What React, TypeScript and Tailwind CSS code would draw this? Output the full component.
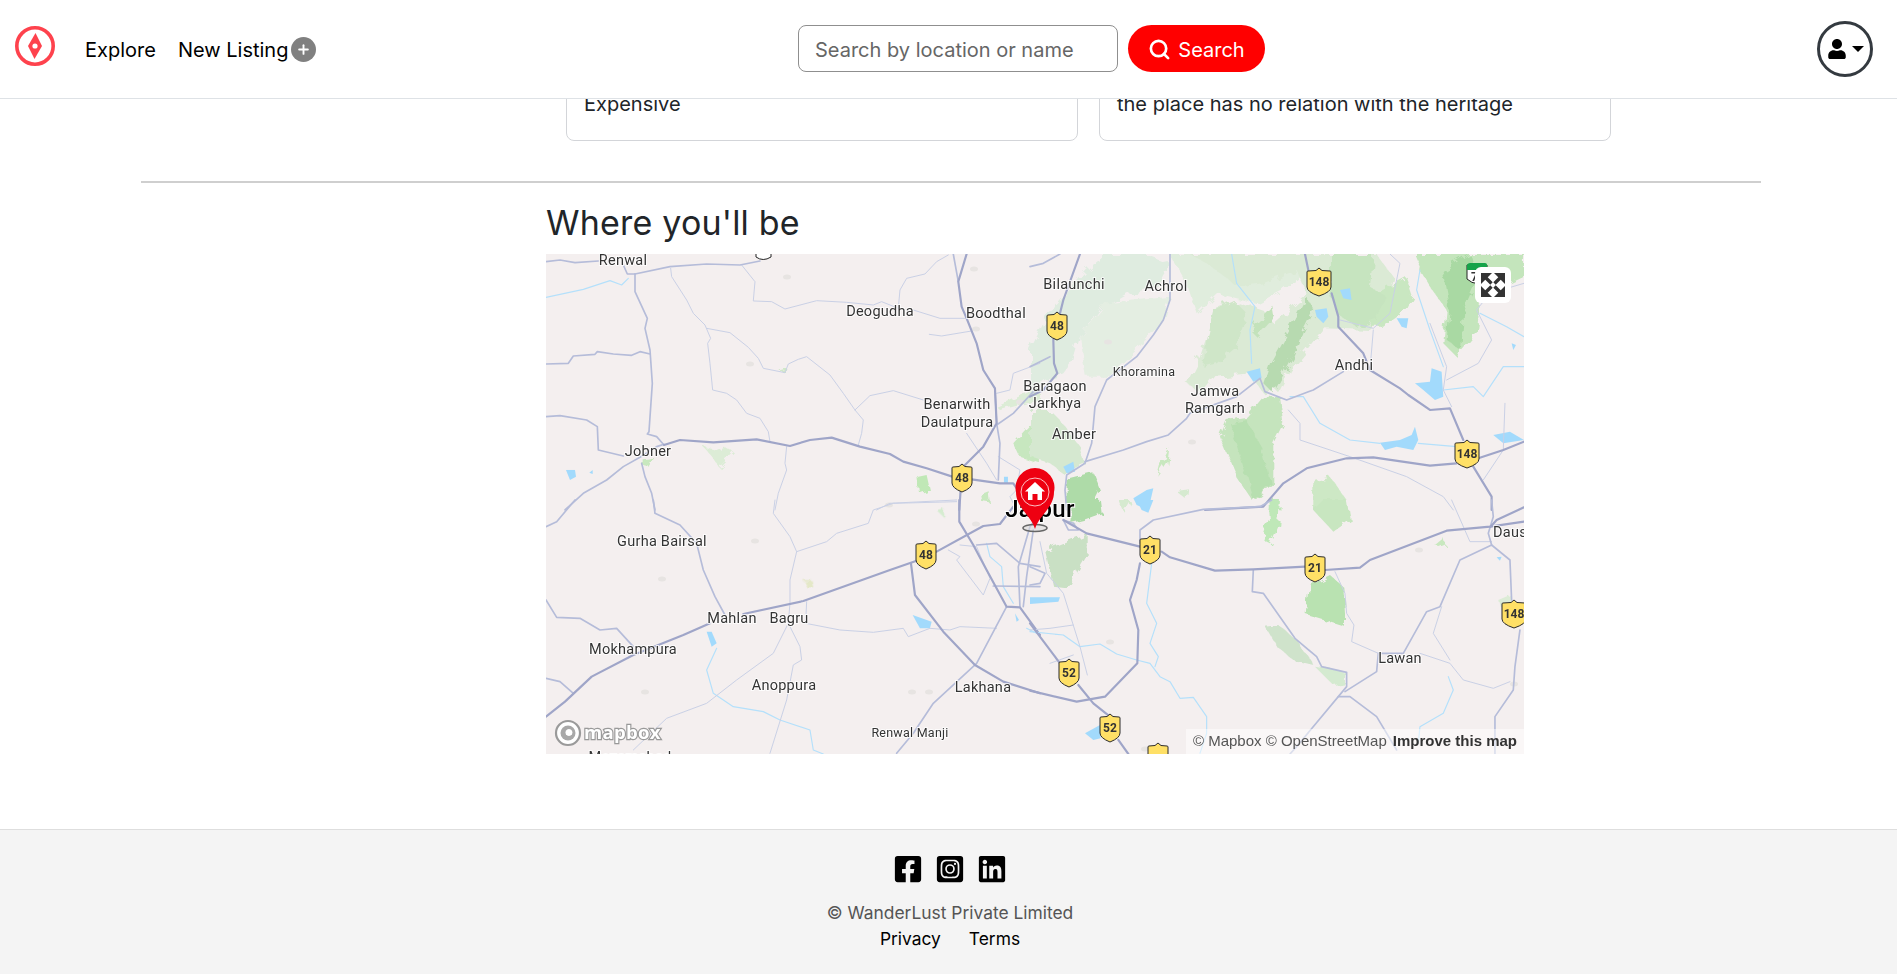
import { FaFacebookSquare, FaInstagramSquare, FaLinkedin, FaUser } from "react-icons/fa";
import { Plus, Search } from "lucide-react";

// map traces, per layer, in the coords of each quadrant (3x scale)
const quads = [
  {
    x: -6,
    y: -4,
    greens: [
      ["M490,590 L530,600 550,590 585,610 540,655 520,625 Z", "#dcecd6"],
      ["M1135,680 L1160,675 1170,720 1140,730 Z", "#c0e8b6"],
      ["M305,625 L340,620 320,650 305,645 Z", "#c8e8bf"],
      ["M1420,580 L1500,490 1500,640 1440,620 Z", "#c7e7bf"],
      ["M1370,470 L1480,420 1500,410 1500,450 1380,480 Z", "#dcecd6"],
      ["M715,358 L740,352 735,368 Z", "#cfe8c8"],
      ["M1320,730 L1345,720 1350,760 1325,755 Z", "#c8e8bf"],
    ],
    water: ["M78,660 L105,660 108,680 90,690 Z", "M148,668 L158,660 158,672 Z", "M1392,680 L1404,680 1404,700 1392,698 Z"],
    rivers: ["M18,142 L130,118 210,92 245,105 265,85"],
    minor: [
      "M392,55 L395,80 440,150 460,190 495,225 512,265 503,280 510,340 518,420 560,430 590,450 620,490 660,505 685,545 690,575",
      "M500,235 L570,248 625,292 655,325 670,355 735,368 745,342 775,328 800,320 870,375 910,430 945,480 970,510 965,550 955,585",
      "M945,480 L990,437 1060,422 1150,450",
      "M605,45 L645,95 640,153 695,155 735,177 830,152 920,157 1000,165 1025,155 1075,175 1080,120 1100,85 1155,72 1190,35 1225,15",
      "M1120,180 L1200,205 1275,205",
      "M1168,253 L1205,258 1295,243",
      "M1370,430 L1410,420 1420,370 1500,340",
      "M740,590 735,640 740,660 715,730 705,780",
      "M1280,550 L1340,640 1370,690",
      "M1375,620 L1440,660 1430,720 1410,740 1430,780",
      "M1010,780 L1050,760 1250,750",
    ],
    secondary: [
      "M18,35 L60,30 105,38 175,33",
      "M250,45 L262,72 285,72",
      "M285,72 L390,50 500,42 600,45 660,33",
      "M285,72 L285,125 322,205 315,235 330,300 337,400 327,545 322,552 350,560 372,585",
      "M18,342 L85,340 100,318 165,313 172,305 220,312 275,316 300,305 330,312",
      "M18,500 L60,497 140,510 172,530 175,600 250,618",
      "M75,780 L130,730 200,690 250,650 300,622 350,590 372,583",
      "M305,640 L315,680 335,730 345,780",
      "M1240,12 L1255,95",
      "M1365,415 1370,520 1380,580 1375,690",
      "M1370,525 L1420,490 1480,425 1500,420",
    ],
    major: [
      "M372,585 L420,570 520,577 650,568 750,588 810,570 875,563 960,590 1050,612 1090,635 1160,655 1237,680",
      "M1295,688 L1380,700 1420,700 1440,730",
      "M1280,12 L1255,95 1265,170 1280,205 1310,280 1330,360 1365,415 1370,520 1330,590 1270,650",
      "M1262,720 L1258,780",
    ],
  },
  {
    x: 484,
    y: -4,
    greens: [
      ["M230,12 L350,12 L420,40 L380,110 L300,130 L210,180 L150,260 L130,330 L100,370 L60,390 L0,430 L0,300 L50,200 L110,130 L170,60 Z", "#dfece0"],
      ["M150,260 L230,160 420,140 400,210 320,300 230,380 170,380 Z", "#e4eee2"],
      ["M0,480 L60,480 90,510 150,590 165,640 100,670 60,640 0,620 Z", "#d5e8d0"],
      ["M420,12 L830,12 L840,60 L760,120 L680,160 L560,130 L500,190 L470,100 Z", "#e0eddd"],
      ["M480,12 L830,12 L1040,12 L1090,80 L1060,200 L1020,240 L880,235 L830,300 L780,360 L750,420 L700,430 L660,370 L560,380 L520,430 L470,400 L510,320 L530,260 L560,170 L610,150 L700,180 L730,220 L830,130 L800,60 L700,100 L620,110 L560,60 Z", "#dbead5"],
      ["M550,180 L610,150 650,190 620,290 560,340 520,350 530,260 Z", "#cfe6c8"],
      ["M660,240 L730,170 735,200 680,260 Z", "#c3e2bb"],
      ["M830,140 L780,230 L720,340 L700,400 L730,430 L790,320 L820,240 L850,180 Z", "#b7dab0"],
      ["M1040,130 L1130,80 1150,140 1130,180 1060,230 1020,230 Z", "#c9e7c1"],
      ["M1150,12 L1482,12 L1482,80 L1400,120 L1350,160 L1340,250 L1280,320 L1240,280 L1250,180 L1200,110 L1170,60 Z", "#c4e5bc"],
      ["M1240,60 L1320,12 L1340,90 L1300,180 L1290,300 L1250,270 L1260,170 Z", "#a9d9a3"],
      ["M900,12 L1030,12 L1020,110 L1070,140 L1040,210 L980,230 L920,190 L900,120 Z", "#c6e4bf"],
      ["M590,510 L650,500 700,440 750,440 760,520 730,580 730,700 670,755 620,680 570,560 Z", "#c5e4bd"],
      ["M600,520 L650,510 700,600 720,700 670,750 640,650 Z", "#b7dfb0"],
      ["M110,690 L190,670 L210,720 L180,780 L110,780 Z", "#aedba8"],
      ["M850,690 L900,680 950,750 950,780 850,780 Z", "#cde8c5"],
      ["M395,640 L418,595 412,640 385,680 Z", "#c8e8bf"],
      ["M435,720 L475,715 470,750 Z", "#d6ead0"],
      ["M720,745 L745,770 745,780 715,780 Z", "#cde8c5"],
    ],
    water: [
      "M650,365 L690,355 695,385 670,395 Z",
      "M855,180 L890,175 895,200 880,220 860,200 Z",
      "M930,120 L960,115 965,150 940,145 Z",
      "M1100,205 L1135,205 1130,235 1115,230 Z",
      "M1155,400 L1200,395 1205,355 1235,365 1240,440 1215,450 1180,420 Z",
      "M1050,578 L1110,570 1145,555 1155,530 1165,570 1150,600 1100,590 1065,600 Z",
      "M1390,555 L1440,545 1482,570 1420,580 Z",
      "M1445,280 L1458,285 1450,300 Z",
      "M100,650 L130,635 135,665 110,670 Z",
      "M310,745 L350,720 370,715 355,780 320,765 Z",
    ],
    rivers: [
      "M605,12 L620,100 675,170 660,240 665,340",
      "M1170,60 L1160,120 1200,240 1240,350",
      "M1240,420 L1330,410 1360,440 1420,350 1482,350",
      "M780,440 L820,440 870,520 960,570 1050,580",
      "M1165,580 L1280,590",
      "M1350,190 L1430,230 1482,260",
    ],
    minor: [
      "M1030,240 L1025,300 1020,360",
      "M1080,12 L1110,40 1080,190 1030,235 930,210",
      "M1200,220 L1250,350 1240,420 1265,470",
      "M1250,390 L1345,340 1385,270 1350,200 1340,180 1380,130 1482,100",
      "M1425,460 L1420,600 1360,690",
      "M775,480 L810,520 810,570 960,620 1130,680 1240,740 1270,780",
    ],
    secondary: [
      "M420,12 L420,150 400,210 370,255 320,320 230,390 195,470 185,580 165,640 110,675 105,720 110,780",
      "M165,635 L280,600 350,575 415,555 470,505 480,490 620,440 690,385 705,425 770,450 850,420 940,365",
      "M0,50 L40,40 90,12",
      "M0,350 L60,320",
    ],
    major: [
      "M150,12 L100,150 70,270 72,340 82,370 40,420 0,440",
      "M825,12 L835,60",
      "M905,130 L925,200 925,230 1000,310 1020,360 1110,415 1135,435 1200,480 1260,475 1300,570",
      "M1330,650 L1385,740 1385,780",
      "M525,780 L700,770 760,700 830,655 950,625 1030,622 1200,647 1280,640",
      "M1345,625 L1420,600 1482,575",
    ],
  },
  {
    x: -6,
    y: 246,
    greens: [
      ["M790,240 L815,240 820,262 800,262 Z", "#e4e8c8"],
      ["M1190,30 L1210,25 1215,55 Z", "#d5ecd0"],
    ],
    water: [
      "M500,395 L515,395 530,430 515,440 Z",
      "M1118,345 L1175,365 1170,385 1140,385 Z",
      "M1425,340 L1437,360 1430,365 Z",
    ],
    rivers: [
      "M530,445 L500,510 520,580 580,620 670,635 720,660 810,690 820,750 850,762",
      "M1340,130 L1350,170 1385,200 1390,260 1420,310",
      "M1460,385 L1500,405",
    ],
    minor: [
      "M705,0 L700,40 750,110 770,155 750,240 750,310 745,370 780,440 785,480 760,495 740,600 690,760",
      "M770,155 L860,125 890,100 985,70 1000,30 1060,10 1250,5",
      "M800,305 L797,370 900,390 1000,397 1090,385 1105,410 1170,385 1230,390 1260,380 1370,385",
      "M745,370 L700,460 590,540 500,610 380,655 280,750",
      "M1225,150 L1260,170 1250,180 1330,285 1350,235 1310,140 1260,135",
    ],
    secondary: [
      "M340,0 L345,40 420,75 470,130 490,210 525,290 555,345",
      "M18,300 L50,352 120,355 180,390 230,385 280,440",
      "M18,535 L60,545 100,580",
      "M18,80 L50,65 105,0",
      "M1400,320 L1310,490 1180,610 1120,700 1070,760",
      "M1310,135 L1370,130 1440,190 1500,200",
      "M1360,258 L1500,260",
      "M1440,320 L1435,200 1470,80 1500,40",
      "M1480,90 L1460,230 1450,320",
    ],
    major: [
      "M18,650 L75,605 155,530 280,465 430,405 510,370",
      "M610,342 L790,303 1050,210 1130,182",
      "M1190,155 L1330,78 1380,72 1420,20",
      "M1113,190 L1125,285 1210,395 1305,495 1390,545 1500,580",
      "M1258,0 L1258,65 1300,135 1340,210 1400,320 1440,322 1500,405",
    ],
  },
  {
    x: 484,
    y: 246,
    greens: [
      ["M45,150 L170,100 170,160 110,265 70,260 Z", "#c9e0c4"],
      ["M130,0 L210,0 215,40 160,60 120,70 Z", "#aedba8"],
      ["M850,30 L880,0 L950,0 L960,60 L910,95 Z", "#c8e6c0"],
      ["M840,255 L900,225 940,260 945,340 945,380 880,360 830,345 Z", "#b9e2b1"],
      ["M705,380 L745,375 800,420 850,495 790,480 740,440 Z", "#cfe3cb"],
      ["M855,500 L945,515 945,550 910,555 Z", "#d4ead0"],
      ["M715,0 L750,0 745,70 720,130 700,120 720,60 Z", "#bfe8b8"],
      ["M1215,135 L1240,115 1245,130 1225,138 Z", "#c8e8bf"],
      ["M1405,300 L1440,285 1440,330 1410,320 Z", "#dcecd6"],
      ["M265,0 L300,0 280,35 Z", "#d6ead0"],
    ],
    water: [
      "M165,700 L210,675 212,715 190,720 Z",
      "M320,0 L370,0 355,38 335,30 Z",
      "M1400,172 L1415,170 1410,182 Z",
      "M0,292 L90,292 85,305 0,312 Z",
    ],
    rivers: [
      "M0,395 L100,405 150,440 210,432 260,462 320,480 360,490 390,530 420,545 450,595 490,592 530,650 530,700 510,760",
      "M365,190 L350,310 380,370 360,430 385,470 375,500",
      "M1255,530 L1270,570 1240,640 1170,680 1165,730",
    ],
    minor: [
      "M915,215 L945,280 950,340 972,375 965,425 1045,460",
      "M1170,460 L1260,490 1300,540 1390,565 1440,545",
      "M1235,320 L1210,400 1260,480",
      "M30,125 L50,220 100,280 150,440 172,525",
      "M0,390 L60,385 130,375",
      "M60,490 L130,465",
      "M1265,0 L1320,125 1385,125",
    ],
    secondary: [
      "M670,210 L667,275 700,280 795,415 860,470 875,500 950,517 950,560 925,590 800,740 780,762",
      "M925,590 L960,590 1040,650 1100,750",
      "M945,575 L1040,515 1045,460 1120,460 1190,335 1230,320 1290,180 1385,135 1440,180 1445,300",
      "M1470,390 L1455,500 1450,570 1395,650 1395,762",
      "M1385,0 L1390,50 1375,100 1385,135",
      "M330,130 L330,90 370,60 520,28 690,20 725,0",
      "M100,60 L115,90 145,90 130,70 100,60",
      "M0,200 L45,220 L30,250 0,255",
    ],
    major: [
      "M100,60 L170,100 330,140",
      "M395,155 L420,172 555,212 670,208 825,200",
      "M885,210 L990,203 1020,180 1250,92 1380,80 1482,65",
      "M1382,80 L1400,60 1482,22",
      "M330,190 L320,240 300,300 325,390 322,490 225,590 140,605 0,572",
      "M0,370 L90,490",
      "M145,555 L190,610 240,650",
      "M265,720 L295,762",
    ],
  },
];

const places = [
  ["Renwal", 77, 6, 14.5],
  ["Deogudha", 334, 57, 14.5],
  ["Boodthal", 450, 59, 14.5],
  ["Benarwith", 411, 150, 14.5],
  ["Daulatpura", 411, 168, 14.5],
  ["Jobner", 102, 197, 14.5],
  ["Bilaunchi", 528, 30, 14.5],
  ["Achrol", 620, 32, 14.5],
  ["Khoramina", 598, 117, 12.5],
  ["Baragaon", 509, 132, 14.5],
  ["Jarkhya", 509, 149, 14.5],
  ["Jamwa", 669, 137, 14.5],
  ["Ramgarh", 669, 154, 14.5],
  ["Amber", 528, 180, 14.5],
  ["Andhi", 808, 111, 14.5],
  ["Gurha Bairsal", 116, 287, 14.5],
  ["Mahlan", 186, 364, 14.5],
  ["Bagru", 243, 364, 14.5],
  ["Mokhampura", 87, 395, 14.5],
  ["Anoppura", 238, 431, 14.5],
  ["Lakhana", 437, 433, 14.5],
  ["Renwal Manji", 364, 478, 12.5],
  ["Mozamabad", 84, 503, 14.5],
  ["Lawan", 854, 404, 14.5],
  ["Dausa", 968, 278, 14.5],
] as const;

const shields = [
  ["48", 416, 224],
  ["48", 511, 72],
  ["148", 773, 28],
  ["148", 921, 200],
  ["48", 380, 301],
  ["21", 604, 296],
  ["21", 769, 314],
  ["52", 523, 419],
  ["52", 564, 474],
  ["148", 968, 360],
  ["", 612, 503],
] as const;

const spots = [
  [241, 23], [430, 75], [204, 110], [116, 325], [209, 287], [99, 438], [366, 438], [383, 438], [428, 15],
  [343, 251], [430, 270], [474, 148], [562, 88], [575, 120], [646, 188], [873, 296], [564, 388], [968, 430], [599, 495],
];

function Shield({ label, x, y }: { label: string; x: number; y: number }) {
  const wide = label.length > 2;
  const w = wide ? 12 : 10;
  return (
    <g transform={`translate(${x},${y})`}>
      <path
        d={`M0,-14 L3,-11.5 L${w - 1},-11 Q${w},-11 ${w},-10 L${w},5 Q${w},10 0,14 Q${-w},10 ${-w},5 L${-w},-10 Q${-w},-11 ${-w + 1},-11 L-3,-11.5 Z`}
        fill="#ffe066"
        stroke="#2b2b2b"
        strokeWidth="1"
      />
      <text y="4" textAnchor="middle" fontFamily="Roboto, sans-serif" fontSize="12" fontWeight="700" fill="#333">
        {label}
      </text>
    </g>
  );
}

function MapDrawing() {
  return (
    <svg viewBox="0 0 978 500" className="block h-full w-full">
      <defs>
        {/* rough natural edges for land cover */}
        <filter id="rough" filterUnits="userSpaceOnUse" x="-20" y="-20" width="1020" height="540">
          <feTurbulence type="fractalNoise" baseFrequency="0.09" numOctaves="3" seed="4" />
          <feDisplacementMap in="SourceGraphic" scale="11" />
          <feGaussianBlur stdDeviation="0.5" />
        </filter>
      </defs>
      <rect width="978" height="500" fill="#f4efef" />
      <g filter="url(#rough)">
        {quads.map((q, i) => (
          <g key={i} transform={`translate(${q.x},${q.y}) scale(0.3333)`}>
            {q.greens.map(([d, c], j) => (
              <path key={j} d={d} fill={c} />
            ))}
          </g>
        ))}
      </g>
      {quads.map((q, i) => (
        <g key={i} transform={`translate(${q.x},${q.y}) scale(0.3333)`}>
          {q.water.map((d, j) => (
            <path key={j} d={d} fill="#a2dafc" />
          ))}
        </g>
      ))}
      {spots.map(([x, y], i) => (
        <ellipse key={i} cx={x} cy={y} rx="4" ry="2.5" fill="#e7e4e2" />
      ))}
      {quads.map((q, i) => (
        <g key={i} transform={`translate(${q.x},${q.y}) scale(0.3333)`} fill="none" strokeLinejoin="round" strokeLinecap="round">
          {q.rivers.map((d, j) => (
            <path key={j} d={d} stroke="#b4e0fb" strokeWidth="3.5" />
          ))}
          {q.minor.map((d, j) => (
            <path key={j} d={d} stroke="#c9d0e5" strokeWidth="3" />
          ))}
          {q.secondary.map((d, j) => (
            <path key={j} d={d} stroke="#b5bcd9" strokeWidth="5" />
          ))}
          {q.major.map((d, j) => (
            <path key={j} d={d} stroke="#9fa5c8" strokeWidth="6.5" />
          ))}
        </g>
      ))}

      <path d="M210,-6 L210,3 Q217,8 225,3 L225,-6 Z" fill="#fff" stroke="#222" strokeWidth="1" />
      <path d="M921,11 h20 v14 q-10,9 -20,0 Z" fill="#fff" stroke="#222" strokeWidth="1" />
      <path d="M921,16 v-5 q1,-2 3,-2 h15 q2,0 2,2 v5 Z" fill="#16a34a" />
      <text x="925" y="27" fontFamily="Roboto, sans-serif" fontSize="12" fontWeight="700" fill="#333">
        7
      </text>
      {shields.map(([label, x, y], i) => (
        <Shield key={i} label={label} x={x} y={y} />
      ))}

      {places.map(([name, x, y, size]) => (
        <text
          key={name}
          x={x}
          y={y + size * 0.36}
          textAnchor="middle"
          fontFamily="Roboto, sans-serif"
          fontSize={size}
          letterSpacing="0.25"
          fill="#333"
          stroke="#fff"
          strokeOpacity="0.8"
          strokeWidth="2"
          paintOrder="stroke"
        >
          {name}
        </text>
      ))}
      <text x="494" y="263" textAnchor="middle" fontFamily="Roboto, sans-serif" fontSize="24" fontWeight="500" letterSpacing="0.3" fill="#000" stroke="#fff" strokeWidth="2" paintOrder="stroke">
        Jaipur
      </text>

      {/* marker */}
      <ellipse cx="489" cy="274" rx="12" ry="3.5" fill="#d8d8d8" fillOpacity="0.5" stroke="#666" strokeWidth="1.5" />
      <path d="M489,275 C485,261 470,254 470,238 A19.5,19.5 0 1 1 508,238 C508,254 493,261 489,275 Z" fill="#ee0011" />
      <circle cx="489" cy="238" r="14" fill="none" stroke="#fff" strokeOpacity="0.75" strokeWidth="1" />
      <path d="M489,228 L499,237.5 L496,237.5 L496,246 L491.5,246 L491.5,240 L486.5,240 L486.5,246 L482,246 L482,237.5 L479,237.5 Z" fill="#fff" />

      {/* mapbox logo */}
      <circle cx="22" cy="479" r="12" fill="#fff" stroke="#9a9a9a" strokeWidth="2.2" />
      <circle cx="22" cy="479" r="7.5" fill="#a8a8a8" />
      <path d="M23,475 a3.5,3.5 0 1 1 -0.1,0 Z" fill="#fff" />
      <text x="38" y="485" fontFamily="'Open Sans', sans-serif" fontSize="18.5" fontWeight="700" letterSpacing="0.3" fill="#fff" stroke="#999" strokeWidth="2.4" paintOrder="stroke">
        mapbox
      </text>
    </svg>
  );
}

function Map() {
  return (
    <div className="relative h-[500px] w-[978px] overflow-hidden">
      <MapDrawing />
      <button className="absolute left-[929px] top-[13px] flex h-9 w-9 items-center justify-center rounded-md bg-white">
        <svg viewBox="0 0 24 24" className="h-6 w-6" fill="#333" stroke="#333">
          <path d="M0,0 H11 L0,11 Z" strokeWidth="0" />
          <path d="M24,0 H13 L24,11 Z" strokeWidth="0" />
          <path d="M0,24 H11 L0,13 Z" strokeWidth="0" />
          <path d="M24,24 H13 L24,13 Z" strokeWidth="0" />
          <path d="M4,4 L10.5,10.5 M20,4 L13.5,10.5 M4,20 L10.5,13.5 M20,20 L13.5,13.5" strokeWidth="3.4" />
        </svg>
      </button>
      <div className="absolute bottom-0 right-0 flex h-[25px] w-[338px] items-center justify-end gap-[6px] bg-white/50 pr-[7px] font-['Liberation_Sans',sans-serif] text-[15px] text-[#555]">
        <span>© Mapbox © OpenStreetMap</span>
        <span className="font-bold text-[#333]">Improve this map</span>
      </div>
    </div>
  );
}

export default function App() {
  return (
    <div className="flex h-[974px] flex-col overflow-hidden bg-white font-['Inter',sans-serif]">
      <nav className="flex h-[99px] shrink-0 items-center border-b border-[#dee2e6] bg-white">
        <div className="flex w-[798px] items-center pl-[15px]">
          <svg viewBox="0 0 40 40" className="-mt-[6px] h-10 w-10">
            <circle cx="20" cy="20" r="18.2" fill="none" stroke="#fe424d" strokeWidth="3.6" />
            <path d="M20.5,7 L27,20 L19.5,33 L13,20 Z" fill="#fe424d" />
            <circle cx="20" cy="20" r="2.6" fill="#fff" />
          </svg>
          <a className="ml-[30px] pt-[2px] text-[20px] text-black">Explore</a>
          <a className="ml-[22px] pt-[2px] text-[20px] text-black">New Listing</a>
          <span className="ml-[3px] flex h-[25px] w-[25px] items-center justify-center rounded-full bg-[#808080]">
            <Plus size={15} strokeWidth={3} className="text-white" />
          </span>
        </div>
        <div className="mb-px flex h-[47px] w-[320px] items-center rounded-lg border border-[#8f8f8f] pl-4 pt-[2px] text-[20px] text-[#666]">
          Search by location or name
        </div>
        <button className="mb-px ml-[10px] flex h-[47px] w-[137px] items-center justify-center gap-[7px] rounded-[25px] bg-[#ff0000] pt-[2px] text-[20px] text-white">
          <Search size={23} strokeWidth={2.8} />
          Search
        </button>
        <div className="ml-auto mr-6 flex h-14 w-14 items-center justify-center gap-[5px] rounded-full border-[3px] border-[#343a40]">
          <FaUser className="text-[20px] text-black" />
          <span className="h-0 w-0 border-x-[6px] border-t-[6px] border-x-transparent border-t-black" />
        </div>
      </nav>

      <main className="flex-1">
        <div className="ml-[566px] h-[42px] w-[1045px] overflow-hidden">
          <div className="-mt-[60px] grid grid-cols-2 gap-[21px]">
            <div className="flex h-[102px] items-end rounded-lg border border-[#d3d5d9] px-[17px] pb-[21px] text-[20px] text-[#212529]">Expensive</div>
            <div className="flex h-[102px] items-end rounded-lg border border-[#d3d5d9] px-[17px] pb-[21px] text-[20px] text-[#212529]">the place has no relation with the heritage</div>
          </div>
        </div>
        <hr className="ml-[141px] mt-[40px] w-[1620px] border-t-2 border-[#cfcfcf]" />
        <h3 className="ml-[546px] mt-[18px] text-[34px] leading-[44px] tracking-[0.2px] text-[#212529]">Where you'll be</h3>
        <div className="ml-[546px] mt-[9px]">
          <Map />
        </div>
      </main>

      <footer className="flex h-[145px] shrink-0 flex-col items-center border-t border-[#dedede] bg-[#f4f4f4]">
        <div className="ml-[2px] mt-[24px] flex gap-3 text-[30px] text-black">
          <FaFacebookSquare />
          <FaInstagramSquare />
          <FaLinkedin />
        </div>
        <div className="ml-[3px] mt-[16px] text-[17.4px] leading-[26px] text-[#555]">© WanderLust Private Limited</div>
        <div className="ml-[3px] flex gap-7 text-[17.4px] leading-[26px] text-black">
          <a>Privacy</a>
          <a>Terms</a>
        </div>
      </footer>
    </div>
  );
}
